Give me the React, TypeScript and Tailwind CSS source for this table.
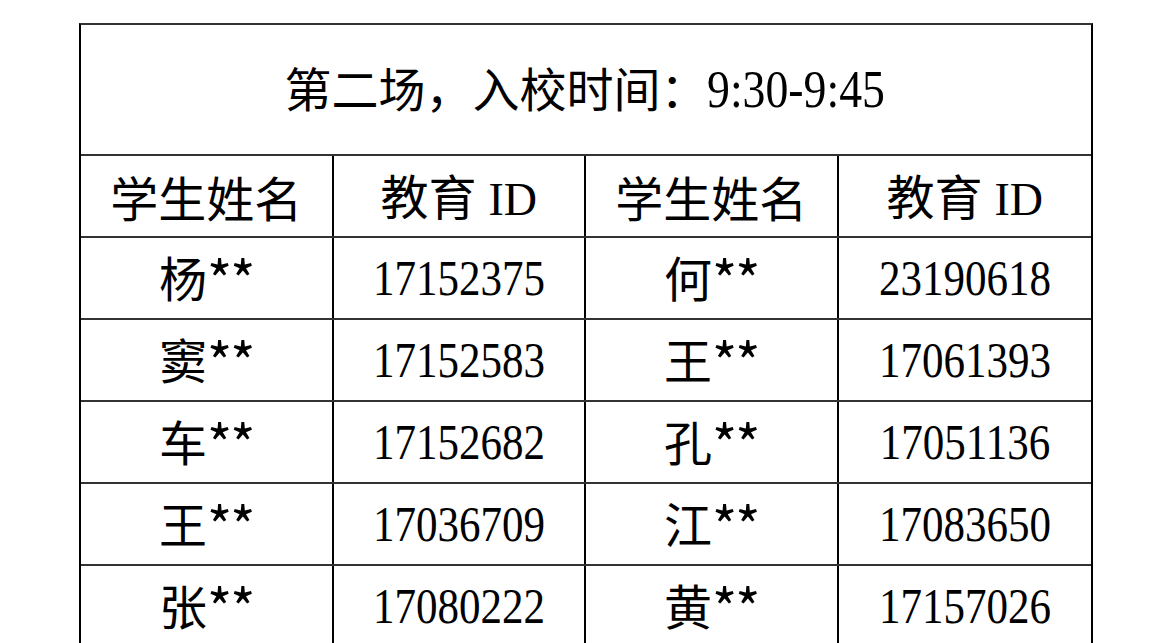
import React from "react";

const cjk = "font-['Noto_Sans_CJK_SC',sans-serif]";
const serif = "font-['Liberation_Serif','Times_New_Roman',serif]";

const rows: [string, string, string, string][] = [
  ["杨", "17152375", "何", "23190618"],
  ["窦", "17152583", "王", "17061393"],
  ["车", "17152682", "孔", "17051136"],
  ["王", "17036709", "江", "17083650"],
  ["张", "17080222", "黄", "17157026"],
];

function Name({ s }: { s: string }) {
  return (
    <span className={`${cjk} text-[48px] leading-none text-black`}>
      {s}
      <span className="text-[54px] tracking-[-2px] align-[-4px]">**</span>
    </span>
  );
}

function Num({ n }: { n: string }) {
  return (
    <span className={`${serif} inline-block scale-x-[0.86] text-[50px] leading-none text-black`}>
      {n}
    </span>
  );
}

function Cell({ children, last }: { children: React.ReactNode; last?: boolean }) {
  return (
    <div className={`flex items-center justify-center ${last ? "" : "border-r-2 border-black"}`}>
      {children}
    </div>
  );
}

function EduId() {
  return (
    <span className={`${cjk} text-[48px] leading-none text-black`}>
      教育<span className={`${serif} ml-[12px] text-[46px]`}>ID</span>
    </span>
  );
}

export default function App() {
  return (
    <div className="w-[1170px] h-[643px] overflow-hidden bg-white pt-[23px] pl-[79px]">
      <div className="w-[1014px] border-2 border-b-0 border-black border-t-[#333]">
        <div className="h-[131px] flex items-center justify-center border-b-2 border-[#333]">
          <span className={`${cjk} text-[47px] leading-none text-black`}>
            第二场，入校时间：
            <span className={`${serif} inline-block origin-left scale-x-[0.88] mr-[-22px] text-[52px]`}>
              9:30-9:45
            </span>
          </span>
        </div>
        <div className="grid grid-cols-4 h-[82px] border-b-2 border-[#333]">
          <Cell>
            <span className={`${cjk} text-[48px] leading-none text-black`}>学生姓名</span>
          </Cell>
          <Cell>
            <EduId />
          </Cell>
          <Cell>
            <span className={`${cjk} text-[48px] leading-none text-black`}>学生姓名</span>
          </Cell>
          <Cell last>
            <EduId />
          </Cell>
        </div>
        {rows.map((r, i) => (
          <div key={i} className="grid grid-cols-4 h-[82px] border-b-2 border-[#333]">
            <Cell>
              <Name s={r[0]} />
            </Cell>
            <Cell>
              <Num n={r[1]} />
            </Cell>
            <Cell>
              <Name s={r[2]} />
            </Cell>
            <Cell last>
              <Num n={r[3]} />
            </Cell>
          </div>
        ))}
      </div>
    </div>
  );
}
